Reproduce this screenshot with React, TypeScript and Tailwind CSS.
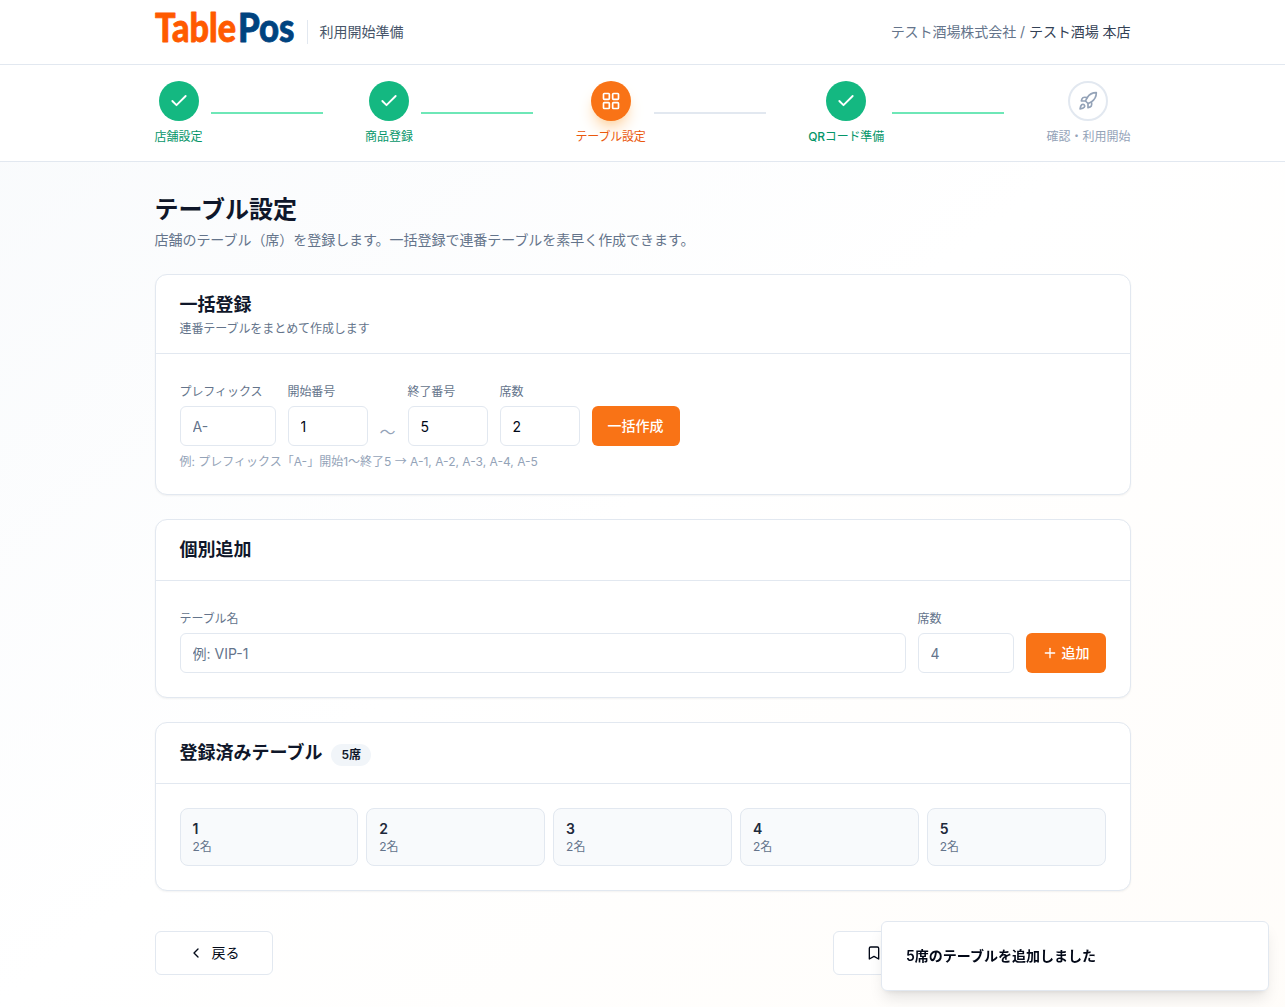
import React from "react";
import { Bookmark, Check, ChevronLeft, LayoutGrid, Plus, Rocket } from "lucide-react";

type StepState = "done" | "current" | "todo";

const steps: { latin?: string; label: string; state: StepState }[] = [
  { label: "店舗設定", state: "done" },
  { label: "商品登録", state: "done" },
  { label: "テーブル設定", state: "current" },
  { latin: "QR", label: "コード準備", state: "done" },
  { label: "確認・利用開始", state: "todo" },
];

const circleStyle = {
  done: "bg-[#14b881] text-white",
  current: "bg-[#f97316] text-white shadow-lg shadow-[#fed7aa]",
  todo: "bg-white border-2 border-[#e2e8f0] text-[#94a3b8]",
};

const labelStyle = {
  done: "text-[#059669]",
  current: "text-[#ea580c]",
  todo: "text-[#94a3b8]",
};

const tables = ["1", "2", "3", "4", "5"];

function Logo() {
  return (
    <svg width="140" height="60" viewBox="0 0 140 60" className="block overflow-visible">
      <g fontFamily="Lato, sans-serif" fontWeight="900" strokeWidth="0.8" strokeLinejoin="round">
        <text
          x="0"
          y="39.5"
          fontSize="40.5"
          fill="#ff5a00"
          stroke="#ff5a00"
          textLength="81"
          lengthAdjust="spacingAndGlyphs"
        >
          Table
        </text>
        <text
          x="83"
          y="39.5"
          fontSize="40.5"
          fill="#00437f"
          stroke="#00437f"
          textLength="56.5"
          lengthAdjust="spacingAndGlyphs"
        >
          Pos
        </text>
      </g>
    </svg>
  );
}

function StepIcon({ state }: { state: StepState }) {
  if (state === "done") return <Check size={20} strokeWidth={2.25} />;
  if (state === "current") return <LayoutGrid size={20} />;
  return <Rocket size={20} />;
}

function Card({
  title,
  description,
  badge,
  children,
}: {
  title: string;
  description?: string;
  badge?: string;
  children: React.ReactNode;
}) {
  return (
    <section className="rounded-xl border border-[#e2e8f0] bg-white shadow-[0_1px_2px_0_rgba(0,0,0,0.05)]">
      <div className="border-b border-[#e2e8f0] px-6 py-4">
        <div className="flex items-center">
          <h2 className="text-lg font-semibold text-[#0f172a]">{title}</h2>
          {badge && (
            <span className="mt-0.5 -mb-0.5 ml-[9px] rounded-full bg-[#f1f5f9] px-2.5 py-[3px] text-xs font-semibold text-[#0f172a]">
              {badge}
            </span>
          )}
        </div>
        {description && (
          <p className="mt-0.5 text-xs tracking-[-0.07px] text-[#64748b]">{description}</p>
        )}
      </div>
      <div className="p-6">{children}</div>
    </section>
  );
}

function Field({
  label,
  width,
  value,
  placeholder,
}: {
  label: string;
  width: string;
  value?: string;
  placeholder?: string;
}) {
  return (
    <div className={width}>
      <label className="block h-7 text-xs leading-7 tracking-[-0.07px] text-[#64748b]">{label}</label>
      <input
        className="block h-10 w-full rounded-md border border-[#e2e8f0] bg-white px-3 text-sm text-[#020817] placeholder:text-[#64748b]"
        defaultValue={value}
        placeholder={placeholder}
      />
    </div>
  );
}

export default function App() {
  return (
    <div className="min-h-screen bg-linear-to-br from-[#f8fafc] via-white to-[#fff7ed]/30 font-['Inter','Noto_Sans_CJK_JP',sans-serif] text-[#020817]">
      <header className="border-b border-[#e2e8f0] bg-white">
        <div className="mx-auto flex h-16 max-w-5xl items-center justify-between px-6">
          <div className="flex items-center gap-3">
            <Logo />
            <span className="border-l border-[#e2e8f0] pl-3 text-sm leading-6 text-[#475569]">
              利用開始準備
            </span>
          </div>
          <div className="text-sm tracking-[-0.05px] text-[#64748b]">
            テスト酒場株式会社 / <span className="text-[#334155]">テスト酒場 本店</span>
          </div>
        </div>
      </header>

      <nav className="border-b border-[#e2e8f0] bg-white">
        <ol className="mx-auto flex max-w-5xl justify-between px-6 py-4">
          {steps.map((step, i) => (
            <li key={step.label} className="flex items-center">
              <div className="flex flex-col items-center gap-2">
                <div
                  className={`flex h-10 w-10 items-center justify-center rounded-full ${circleStyle[step.state]}`}
                >
                  <StepIcon state={step.state} />
                </div>
                <span
                  className={`text-xs ${labelStyle[step.state]} ${/[ァ-ヶ]/.test(step.label) ? "tracking-[-0.17px]" : ""}`}
                >
                  {step.latin && <span className="font-medium">{step.latin}</span>}
                  {step.label}
                </span>
              </div>
              {i < steps.length - 1 && (
                <div
                  className={`ml-2 h-0.5 w-28 ${step.state === "done" ? "bg-[#6ee7b7]" : "bg-[#e2e8f0]"}`}
                />
              )}
            </li>
          ))}
        </ol>
      </nav>

      <main className="mx-auto max-w-5xl px-6 py-8">
        <h1 className="text-2xl font-bold text-[#0f172a]">テーブル設定</h1>
        <p className="mt-1 text-sm tracking-[-0.04px] text-[#64748b]">
          店舗のテーブル（席）を登録します。一括登録で連番テーブルを素早く作成できます。
        </p>

        <div className="mt-6 flex flex-col gap-6">
          <Card title="一括登録" description="連番テーブルをまとめて作成します">
            <div className="flex items-end gap-3">
              <Field label="プレフィックス" width="w-24" placeholder="A-" />
              <Field label="開始番号" width="w-20" value="1" />
              <span className="w-4 pb-0.5 text-[#94a3b8]">〜</span>
              <Field label="終了番号" width="w-20" value="5" />
              <Field label="席数" width="w-20" value="2" />
              <button className="h-10 rounded-md bg-[#f97316] px-4 text-sm font-medium text-white">
                一括作成
              </button>
            </div>
            <p className="mt-2 h-4 text-xs text-[#94a3b8]">
              例: プレフィックス「A-」開始1〜終了5{" "}
              <span className="font-['Noto_Sans_CJK_JP',sans-serif] leading-none">→</span> A-1, A-2, A-3, A-4, A-5
            </p>
          </Card>

          <Card title="個別追加">
            <div className="flex items-end gap-3">
              <Field label="テーブル名" width="flex-1" placeholder="例: VIP-1" />
              <Field label="席数" width="w-24" placeholder="4" />
              <button className="flex h-10 items-center gap-1 rounded-md bg-[#f97316] px-4 text-sm font-medium text-white">
                <Plus size={16} />
                追加
              </button>
            </div>
          </Card>

          <Card title="登録済みテーブル" badge="5席">
            <ul className="grid grid-cols-5 gap-2">
              {tables.map((name) => (
                <li key={name} className="rounded-lg border border-[#e2e8f0] bg-[#f8fafc] px-3 py-2.5">
                  <p className="text-sm font-semibold text-[#1e293b]">{name}</p>
                  <p className="text-xs text-[#64748b]">2名</p>
                </li>
              ))}
            </ul>
          </Card>
        </div>

        <div className="mt-10 flex justify-between">
          <button className="flex h-11 items-center gap-2 rounded-md border border-[#e2e8f0] bg-white px-8 text-sm">
            <ChevronLeft size={16} />
            戻る
          </button>
          <button className="flex h-11 w-[298px] items-center rounded-md border border-[#e2e8f0] bg-white px-8">
            <Bookmark size={16} />
          </button>
        </div>
      </main>

      <div className="fixed right-4 bottom-4 w-[388px] rounded-md border border-[#e2e8f0] bg-white p-6 text-sm font-semibold shadow-lg">
        5席のテーブルを追加しました
      </div>
    </div>
  );
}
